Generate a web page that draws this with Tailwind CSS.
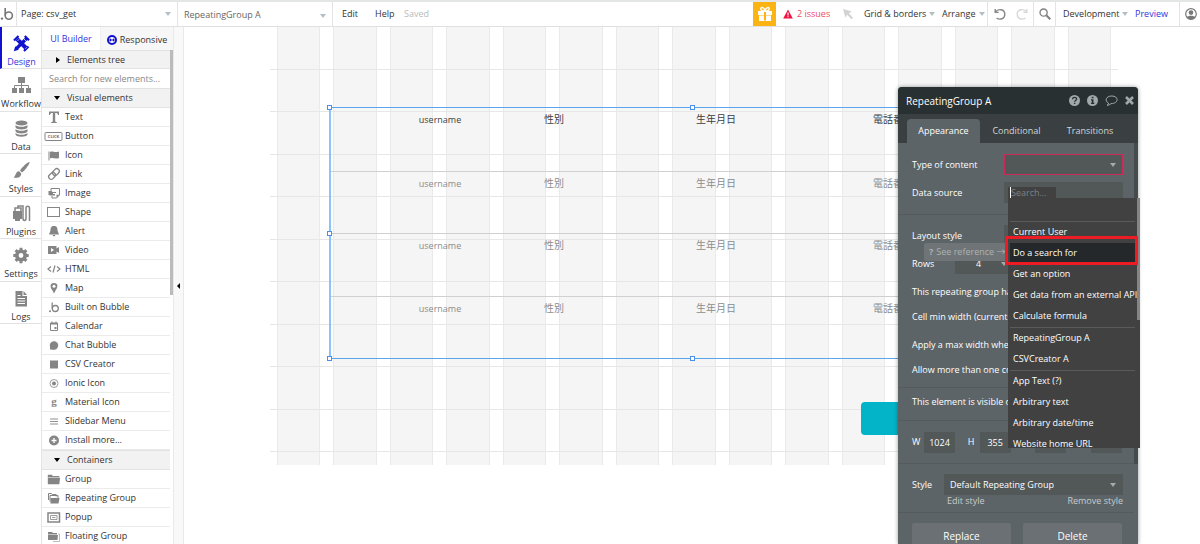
<!DOCTYPE html>
<html lang="en">
<head>
    <meta charset="UTF-8">
    <meta name="viewport" content="width=device-width, initial-scale=1.0">
    <title>csv_get | Bubble Editor</title>
    <script src="https://cdn.jsdelivr.net/npm/@tailwindcss/browser@4"></script>
</head>
<body class="h-screen overflow-hidden flex flex-col bg-white font-['Open_Sans','Noto_Sans_CJK_JP',sans-serif] text-[9px] leading-3 text-[#333]">

    <!-- Top bar -->
    <header class="h-[27px] shrink-0 flex items-stretch border-t-2 border-b border-t-[#e4e6e6] border-b-[#e0e0e0]">
        <a href="#" aria-label="Home" class="w-[17px] shrink-0 flex items-center border-r border-[#e4e4e4]">
            <svg class="w-4 h-4" viewBox="0 0 16 16" fill="none" stroke="#777" stroke-width="1.6"><circle cx="2" cy="12.6" r="1.2" fill="#777" stroke="none"/><path d="M5.2 2v7.500"/><circle cx="8.800" cy="9.600" r="3.600"/></svg>
        </a>
        <div class="relative w-[161px] flex border-r border-[#e4e4e4]">
            <select aria-label="Page" class="appearance-none w-full pl-1 outline-none"><option>Page: csv_get</option></select>
            <svg class="absolute right-1.5 top-2.5 w-1.5 h-1 pointer-events-none" viewBox="0 0 6 4" fill="#b4bfc6"><path d="M0 0h6L3 4z"/></svg>
        </div>
        <div class="relative w-[155px] flex border-r border-[#e4e4e4]">
            <select aria-label="Element" class="appearance-none w-full pl-1.5 pt-0.5 outline-none text-[#666]"><option>RepeatingGroup A</option></select>
            <svg class="absolute right-1.5 top-3 w-1.5 h-1 pointer-events-none" viewBox="0 0 6 4" fill="#b4bfc6"><path d="M0 0h6L3 4z"/></svg>
        </div>
        <nav class="flex items-center pl-[9px]">
            <button class="w-[33px] text-left">Edit</button>
            <button class="w-[29px] text-left">Help</button>
            <span class="text-[#bbb]">Saved</span>
        </nav>
        <div class="ml-auto flex items-stretch">
            <button aria-label="Gifts" class="w-[23px] bg-[#fcb415] flex items-center justify-center">
                <svg class="w-4 h-4" viewBox="0 0 16 16"><path d="M1 5h14v4H1zM2 9.500h12V15H2z" fill="#fff"/><path d="M8 5C5 5 3.500 4 3.800 2.600 4.200 1 7 .8 8 5c1-4.200 3.800-4 4.200-2.400C12.500 4 11 5 8 5z" fill="none" stroke="#fff" stroke-width="1.400"/><path d="M7 6v8.500h2V6z" fill="#fcb415"/></svg>
            </button>
            <button class="w-[66px] pl-[7px] flex items-center gap-1 text-[#ee4a5f]">
                <svg class="w-2.5 h-2.5" viewBox="0 0 10 10"><path d="M5 .5L9.800 9.400H.2z" fill="#f2113f"/><path d="M5 3.500v3M5 7.300v1" stroke="#fff" stroke-width="1.200"/></svg>
                2 issues
            </button>
            <button aria-label="Select" class="w-[22px] pl-px flex items-center">
                <svg class="w-2.5 h-3" viewBox="0 0 10 12" fill="#d3d3d3"><path d="M0 1l9 2.500-3.200 1.700 4.200 4.600-1.600 1.500L4.200 6.700 2.400 9.600z"/></svg>
            </button>
            <button class="w-[78px] flex items-center gap-[3px]">Grid &amp; borders
                <svg class="w-1.5 h-1" viewBox="0 0 6 4" fill="#b4bfc6"><path d="M0 0h6L3 4z"/></svg>
            </button>
            <button class="w-[46px] flex items-center gap-[3px] border-r border-[#e4e4e4]">Arrange
                <svg class="w-1.5 h-1" viewBox="0 0 6 4" fill="#b4bfc6"><path d="M0 0h6L3 4z"/></svg>
            </button>
            <button aria-label="Undo" class="w-[23px] flex items-center justify-center">
                <svg class="w-3 h-3" viewBox="0 0 12 12" fill="none" stroke="#888" stroke-width="1.400"><path d="M1.200 1v3.400h3.400M1.500 4.200C4 .2 10.800 1 10.800 6.200c0 4.800-5 6-8.200 3.900"/></svg>
            </button>
            <button aria-label="Redo" class="w-[23px] flex items-center justify-center border-r border-[#e4e4e4]">
                <svg class="w-3 h-3" viewBox="0 0 12 12" fill="none" stroke="#d8d8d8" stroke-width="1.400"><path d="M10.800 1v3.400H7.400M10.500 4.200C8 .2 1.200 1 1.200 6.200c0 4.800 5 6 8.200 3.900"/></svg>
            </button>
            <button aria-label="Search" class="w-[22px] flex items-center justify-center border-r border-[#e4e4e4]">
                <svg class="w-3 h-3" viewBox="0 0 12 12" fill="none" stroke="#808080"><circle cx="4.600" cy="4.600" r="3.600" stroke-width="1.300"/><path d="M7.300 7.300l4 4" stroke-width="2"/></svg>
            </button>
            <button class="w-[77px] pl-[7px] flex items-center gap-[3px]">Development
                <svg class="w-1.5 h-1" viewBox="0 0 6 4" fill="#b4bfc6"><path d="M0 0h6L3 4z"/></svg>
            </button>
            <a href="#" class="w-[47px] pl-0.5 flex items-center text-[#3434dc] border-r border-[#e4e4e4]">Preview</a>
            <button aria-label="Account" class="w-5 pl-[5px] flex items-center">
                <svg class="w-3 h-3 shrink-0" viewBox="0 0 12 12"><circle cx="6" cy="6" r="5.300" fill="#fff" stroke="#777" stroke-width="1.200"/><circle cx="6" cy="4.600" r="2.300" fill="#777"/><path d="M1.800 9.300C3 7.300 9 7.300 10.200 9.300 8 12.200 4 12.200 1.800 9.300z" fill="#777"/></svg>
            </button>
        </div>
    </header>

    <div class="flex-1 min-h-0 flex">

        <!-- Main tabs -->
        <nav class="w-[42px] shrink-0 border-r border-[#e4e4e4]">
            <div id="tabs" class="h-[297px] grid grid-rows-7"></div>
        </nav>

        <!-- Element palette -->
        <aside class="w-[131px] shrink-0 flex flex-col">
            <div class="h-[23px] shrink-0 flex">
                <button class="w-[58px] text-[#3434dc]">UI Builder</button>
                <button class="flex-1 pt-0.5 flex items-center justify-center gap-[3px] bg-[#f7f7f7] border-l border-[#eee]">
                    <svg class="w-2.5 h-2.5" viewBox="0 0 10 10"><circle cx="5" cy="5" r="4" fill="none" stroke="#1111cf" stroke-width="2"/><path d="M2 5l2-1.800v1.200h2V3.200L8 5 6 6.800V5.600H4v1.200z" fill="#1111cf"/></svg>
                    Responsive
                </button>
            </div>
            <div class="flex-1 min-h-0 flex">
                <div class="flex-1 min-w-0 overflow-hidden">
                    <button class="w-full h-[19px] pl-[14px] flex items-center gap-[7px] bg-[#f2f2f2] border-y border-[#e2e2e2]">
                        <svg class="w-1 h-1.5" viewBox="0 0 4 6"><path d="M0 0l4 3-4 3z"/></svg>Elements tree
                    </button>
                    <input type="text" aria-label="Search for new elements" placeholder="Search for new elements..." class="block w-full h-[19px] px-[7px] outline-none placeholder:text-[#888]">
                    <button class="w-full h-5 pl-[12px] flex items-center gap-[7px] bg-[#f2f2f2] border-y border-[#e2e2e2]">
                        <svg class="w-1.5 h-1" viewBox="0 0 6 4"><path d="M0 0h6L3 4z"/></svg>Visual elements
                    </button>
                    <div id="visual"></div>
                    <button class="w-full h-5 pl-[12px] flex items-center gap-[7px] bg-[#f2f2f2] border-y border-[#e2e2e2]">
                        <svg class="w-1.5 h-1" viewBox="0 0 6 4"><path d="M0 0h6L3 4z"/></svg>Containers
                    </button>
                    <div id="containers"></div>
                </div>
                <div class="w-[3px] h-[245px] bg-[#bbb]"></div>
            </div>
        </aside>
        <button aria-label="Collapse palette" class="w-[11px] shrink-0 flex items-center justify-center bg-[#f9f9f9] border-x border-[#e9e9e9]">
            <svg class="w-[3px] h-1.5" viewBox="0 0 3 6"><path d="M3 0v6L0 3z"/></svg>
        </button>

        <!-- Canvas -->
        <main class="relative flex-1 min-w-0 overflow-hidden">
            <div class="absolute left-[86px] top-0 w-[848px] h-[438px]">
                <div id="columns" class="absolute inset-x-[7px] inset-y-0 grid grid-cols-15 gap-[13px]"></div>
                <div id="lines" class="absolute inset-x-0 top-0 h-[425px] grid grid-rows-10"></div>
                <div class="absolute left-[591px] top-[375px] w-[140px] h-[33px] rounded bg-[#03b4c8]"></div>
                <div class="absolute left-[59px] top-20 w-[726px] h-[252px] border border-l-2 border-[#5aa5ec] border-l-[#8cc4fa]">
                    <div id="cells" class="h-full grid grid-rows-4"></div>
                    <i class="absolute -left-1 -top-[3px] size-[5px] bg-white border border-[#4a8ff0]"></i>
                    <i class="absolute left-[359px] -top-[3px] size-[5px] bg-white border border-[#4a8ff0]"></i>
                    <i class="absolute -left-1 top-[123px] size-[5px] bg-white border border-[#4a8ff0]"></i>
                    <i class="absolute -left-1 -bottom-[3px] size-[5px] bg-white border border-[#4a8ff0]"></i>
                    <i class="absolute left-[359px] -bottom-[3px] size-[5px] bg-white border border-[#4a8ff0]"></i>
                </div>
            </div>
        </main>
    </div>

    <!-- Property editor -->
    <section class="absolute right-[62px] top-[87px] bottom-0 w-[240px] flex flex-col rounded-t overflow-hidden bg-[#5d6467] text-white shadow-[0_0_4px_rgba(0,0,0,0.4)]">
        <div class="h-[27px] shrink-0 pl-2 pr-1 flex items-center bg-[#293031] text-white">
            <h2 class="text-[10px]">RepeatingGroup A</h2>
            <div class="ml-auto flex items-center gap-[7px]">
                <button aria-label="Help"><svg class="block w-[11px] h-[11px]" viewBox="0 0 11 11"><circle cx="5.500" cy="5.500" r="5.500" fill="#a2a8a9"/><path d="M3.600 4.200c0-2.400 4-2.400 4-.1 0 1.400-2 1.400-2 2.700M5.600 7.700v1.400" fill="none" stroke="#293031" stroke-width="1.400"/></svg></button>
                <button aria-label="Info"><svg class="block w-[11px] h-[11px]" viewBox="0 0 11 11"><circle cx="5.500" cy="5.500" r="5.500" fill="#a2a8a9"/><path d="M4.700 1.700h1.800v1.600H4.700zM4 4.200h2.500v3.600h.8V9H4V7.800h.8V5.400H4z" fill="#293031"/></svg></button>
                <button aria-label="Comment"><svg class="block w-[13px] h-[11px]" viewBox="0 0 13 11" fill="none" stroke="#a2a8a9"><path d="M3.600 8.200C-.8 6 .8 1 6.800 1c7.200 0 7.200 7.600-.8 7.600C5 9.800 3.300 10.300 2 10.200c.9-.4 1.500-1 1.600-2z"/></svg></button>
                <button aria-label="Close"><svg class="block w-[9px] h-[9px]" viewBox="0 0 9 9" stroke="#a2a8a9" stroke-width="2.600"><path d="M1 1l7 7M8 1L1 8"/></svg></button>
            </div>
        </div>
        <div class="h-[29px] shrink-0 pl-[9px] flex items-end bg-[#3a4042] text-[#d2d5d6]">
            <button class="w-[73px] h-6 rounded-t bg-[#5d6467] text-white">Appearance</button>
            <button class="w-[73px] h-6">Conditional</button>
            <button class="w-[74px] h-6">Transitions</button>
        </div>
        <div class="relative flex-1 min-h-0 overflow-hidden whitespace-nowrap">
            <div class="absolute right-0 top-0 w-1 h-[321px] bg-[#464c4e]"></div>
            <form class="w-[236px]">
                <div class="pl-[14px] pr-[11px] pt-[11px] pb-[11px] flex flex-col gap-[7px] border-b border-[#555b5d]">
                    <div class="h-[21px] flex items-center justify-between">
                        <label for="type">Type of content</label>
                        <div class="relative w-[119px] h-full">
                            <select id="type" class="appearance-none w-full h-full bg-[#525758] border border-[#c82d58] outline-none"><option></option></select>
                            <svg class="absolute right-[7px] top-[9px] w-1.5 h-1 pointer-events-none" viewBox="0 0 6 4" fill="#a5aaab"><path d="M0 0h6L3 4z"/></svg>
                        </div>
                    </div>
                    <div class="h-[21px] flex items-center justify-between">
                        <label for="source">Data source</label>
                        <div class="w-[119px] h-full pl-1 pt-[5px] bg-[#525758]">
                            <div class="w-12 h-4 pl-0.5 bg-[#414141]">
                                <input id="source" type="text" placeholder="Search..." class="block w-full h-[11px] border-l border-white outline-none placeholder:text-[#808080]">
                            </div>
                        </div>
                    </div>
                </div>
                <div class="pl-[14px] pr-[11px] pt-[10px] pb-[7px] flex flex-col border-b border-[#555b5d]">
                    <div class="h-[21px] mb-[7px] flex items-center justify-between">
                        <label for="layout">Layout style</label>
                        <select id="layout" class="appearance-none w-[119px] h-full bg-[#525758]"><option></option></select>
                    </div>
                    <div class="h-[21px] mb-[7px] flex items-center">
                        <label for="rows" class="w-[43px]">Rows</label>
                        <div class="relative w-14 h-full">
                            <select id="rows" class="appearance-none w-full h-full pl-[21px] bg-[#525758] outline-none"><option>4</option></select>
                            <svg class="absolute right-1 top-[9px] w-1.5 h-1 pointer-events-none" viewBox="0 0 6 4" fill="#a5aaab"><path d="M0 0h6L3 4z"/></svg>
                        </div>
                    </div>
                    <div class="h-[21px] mb-1 flex items-center justify-between">
                        <label for="fixed">This repeating group has fixed rows</label>
                        <input id="fixed" type="checkbox" class="size-3">
                    </div>
                    <div class="h-[21px] mb-[7px] flex items-center justify-between">
                        <label for="minw">Cell min width (current width)</label>
                        <input id="minw" type="text" class="w-8 h-full bg-[#525758]">
                    </div>
                    <div class="h-[21px] mb-1 flex items-center justify-between">
                        <label for="maxw">Apply a max width when stretched</label>
                        <input id="maxw" type="checkbox" class="size-3">
                    </div>
                    <div class="h-[21px] flex items-center justify-between">
                        <label for="multi">Allow more than one column</label>
                        <input id="multi" type="checkbox" class="size-3">
                    </div>
                </div>
                <div class="pl-[14px] pr-[11px] h-[33px] pb-1 flex items-center justify-between border-b border-[#555b5d]">
                    <label for="visible">This element is visible on page load</label>
                    <input id="visible" type="checkbox" class="size-3">
                </div>
                <div class="pl-[14px] pr-[12px] h-[43px] flex items-center justify-between border-b border-[#555b5d]">
                    <label class="w-[43px] flex items-center justify-between">W<input type="text" value="1024" class="w-[31px] h-[21px] text-center bg-[#525758]"></label>
                    <label class="w-[43px] flex items-center justify-between">H<input type="text" value="355" class="w-[31px] h-[21px] text-center bg-[#525758]"></label>
                    <label class="w-[43px] flex items-center justify-between">X<input type="text" class="w-[31px] h-[21px] text-center bg-[#525758]"></label>
                    <label class="w-[43px] flex items-center justify-between">Y<input type="text" class="w-[31px] h-[21px] text-center bg-[#525758]"></label>
                </div>
                <div class="pl-[14px] pr-[11px] pt-[10px] pb-[5px] border-b border-[#555b5d]">
                    <div class="h-[21px] flex items-center">
                        <label for="style" class="w-8">Style</label>
                        <div class="relative flex-1 h-full">
                            <select id="style" class="appearance-none w-full h-full pl-1.5 bg-[#525758] outline-none"><option>Default Repeating Group</option></select>
                            <svg class="absolute right-[7px] top-[9px] w-1.5 h-1 pointer-events-none" viewBox="0 0 6 4" fill="#a5aaab"><path d="M0 0h6L3 4z"/></svg>
                        </div>
                    </div>
                    <div class="pl-[35px] flex justify-between text-[#c9cccd]">
                        <a href="#">Edit style</a>
                        <a href="#">Remove style</a>
                    </div>
                </div>
                <div class="pl-[14px] pr-[12px] pt-[10px] grid grid-cols-2 gap-3">
                    <button type="button" class="h-[25px] bg-[#6a7073] text-[10px] rounded-xs">Replace</button>
                    <button type="button" class="h-[25px] bg-[#6a7073] text-[10px] rounded-xs">Delete</button>
                </div>
            </form>
        </div>
    </section>

    <div class="absolute right-[190px] top-[243px] w-[86px] h-[18px] pl-[5px] pb-px flex items-center gap-[3px] rounded-xs bg-[#6f7577] text-[#adb1b2] whitespace-nowrap"><b>?</b>See reference →</div>

    <!-- Data source menu -->
    <div class="absolute right-[60px] top-[198px] w-[132px] h-[250px] overflow-hidden bg-[#414141] text-white whitespace-nowrap">
        <div class="absolute right-0 top-0 w-[3px] h-[122px] bg-[#858585]"></div>
        <div id="menu" class="w-[127px] pt-[23px]"></div>
    </div>
    <div class="absolute right-[62px] top-[236px] w-[133px] h-[29px] border-3 border-[#ed1c24] pointer-events-none"></div>

    <script>
        const g = '#858585';
        const tabs = [
            ['Design', `<g stroke="#1111cf" fill="none"><path d="M5 5l10 10" stroke-width="4"/><path d="M15 4L4.500 14.500" stroke-width="3.200"/><path d="M2 6.500L6.500 2M12 17l4.500-4.500M12.800 2L17 6.200" stroke-width="2.200"/></g><path d="M1.800 17.200l1.400-5 3.600 3.600z" fill="#1111cf"/><path d="M7.200 5.200L5.600 6.800M15 13.200l-1.600 1.600M12 5l2.200 2.200" stroke="#fff" stroke-width=".7"/>`],
            ['Workflow', `<path d="M6 1h7v6H6zM0 12h5v5H0zM7 12h5v5H7zM14 12h5v5h-5z" fill="${g}"/><path d="M9.500 7v5M2.500 12V9.500h14V12" fill="none" stroke="${g}"/>`],
            ['Data', `<g fill="${g}"><ellipse cx="9.500" cy="4" rx="6" ry="2.600"/><path d="M3.500 6c2 2.400 10 2.400 12 0v2.200c-1 3-11 3-12 0zM3.500 10c2 2.400 10 2.400 12 0v2.200c-1 3-11 3-12 0zM3.500 14c2 2.400 10 2.400 12 0v1.500c-1 3-11 3-12 0z"/></g>`],
            ['Styles', `<path d="M17.500 1c1 .8-4.500 8.500-7.500 10.500L8 9.500C10 6 16.500.2 17.500 1zM7.200 10.300l2 2.100c.2 3.500-3.500 5.200-7.700 4 2.700-1.400 2-6.300 5.700-6.100z" fill="${g}"/>`],
            ['Plugins', `<path d="M1 7h9v8H8v2H3v-2H1z" fill="${g}"/><path d="M3 7V4h6v3M6 4V2h5v12.500c0 2.500 3 2.500 3 0V4c0-2.500 3.500-2.500 3.500 0v13" fill="none" stroke="${g}" stroke-width="1.500"/>`],
            ['Settings', `<circle cx="9" cy="9.500" r="4.200" fill="none" stroke="${g}" stroke-width="3.600"/><path d="M9 1.800v3M9 14.200v3M1.300 9.500h3M13.700 9.500h3M3.600 4.100l2 2M12.400 12.900l2 2M14.400 4.100l-2 2M5.600 12.900l-2 2" stroke="${g}" stroke-width="3"/>`],
            ['Logs', `<path d="M3.500 2h7v5H15v10.500H3.500zM11.500 2L15 6h-3.500z" fill="${g}"/><path d="M5.500 9.500h7.500M5.500 12h7.500M5.500 14.500h7.500M5.500 6.500h3" stroke="#fff"/>`]
        ];
        document.getElementById('tabs').innerHTML = tabs.map(([name, icon], i) => `
            <button class="w-full ${i === 0 ? 'border-l-2 border-l-[#1111cf] text-[#3434dc]' : 'pl-px'} pt-[7px] flex flex-col items-center gap-[3px] border-b border-b-[#e2e2e2]">
                <svg class="w-[19px] h-[19px] shrink-0" viewBox="0 0 19 19">${icon}</svg>${name}
            </button>`).join('');

        const folder = `<path d="M1 2h5l1 1.500h8V5H1zM1 5.500h15L15 13H1z" fill="${g}"/>`;
        const visual = [
            ['Text', `<path d="M3 2.500h10V6h-1c-.3-1.600-.8-2-2.800-2v8c0 .8.300 1 1.600 1.100v.9H5.200v-.9c1.300-.1 1.600-.3 1.600-1.100V4C4.800 4 4.300 4.400 4 6H3z" fill="${g}"/>`],
            ['Button', `<rect x="-1" y="4.500" width="17" height="8" rx="1" fill="none" stroke="${g}"/><text x="7.500" y="10.200" font-size="4" text-anchor="middle" fill="#666" font-weight="bold">CLICK</text>`],
            ['Icon', `<path d="M3 4.500v9" stroke="${g}"/><path d="M4 5c3-1.500 4 1 9-.5v6.500c-4 1.500-6-1-9 .5z" fill="${g}"/>`],
            ['Link', `<g fill="none" stroke="${g}" stroke-width="1.300" transform="rotate(-45 8 8)"><rect x="1.500" y="5.500" width="7.500" height="5" rx="2.500"/><rect x="7" y="5.500" width="7.500" height="5" rx="2.500"/></g>`],
            ['Image', `<path d="M5 6V3.500h8.500v6.500L10.500 13H6v-2" fill="none" stroke="${g}"/><path d="M2.500 6h3l1 1H10v1H7v1h2v1.500H4.500L2.500 10z" fill="${g}"/><path d="M13.500 9.800h-3V13z" fill="${g}"/>`],
            ['Shape', `<rect x="1.500" y="3.500" width="12" height="9" fill="none" stroke="${g}"/>`],
            ['Alert', `<path d="M8 3c3 0 3.500 2 3.500 4.500L13 11.500H3l1.500-4C4.500 5 5 3 8 3zM6.500 12h3c-.5 1.800-2.500 1.800-3 0z" fill="${g}"/>`],
            ['Video', `<path d="M2 4h8.500v2.500L13 5v6l-2.500-1.500V12H2z" fill="${g}"/><path d="M5 6v4l3-2z" fill="#fff"/>`],
            ['HTML', `<path d="M5 5.500L2 8l3 2.500M11 5.500L14 8l-3 2.500M9 4.500L7 11.500" fill="none" stroke="${g}" stroke-width="1.200"/>`],
            ['Map', `<path d="M8 3c4.500 0 4 4.200 1.800 7L8 13.500 6.200 10C4 7.200 3.500 3 8 3z" fill="${g}"/><circle cx="8" cy="6.300" r="1.500" fill="#fff"/>`],
            ['Built on Bubble', `<circle cx="9.300" cy="9.500" r="3" fill="none" stroke="${g}" stroke-width="1.300"/><path d="M6.200 3.500v6" stroke="${g}" stroke-width="1.300"/><circle cx="4" cy="12.200" r="1" fill="${g}"/>`],
            ['Calendar', `<path d="M4.500 5h7v7.500h-7zM6 3.500V5M10 3.500V5" fill="none" stroke="${g}"/><path d="M4.500 5h7v1.500h-7zM8.500 9h2v2h-2z" fill="${g}"/>`],
            ['Chat Bubble', `<circle cx="8" cy="8.500" r="4.200" fill="${g}"/><path d="M4 12.500h4v-3H4z" fill="${g}"/>`],
            ['CSV Creator', `<path d="M4 4.500h8v8H4z" fill="${g}"/>`],
            ['Ionic Icon', `<circle cx="8" cy="8.500" r="4" fill="none" stroke="${g}" stroke-width=".8"/><circle cx="8" cy="8.500" r="2" fill="${g}"/>`],
            ['Material Icon', `<text x="8" y="11" font-size="11" font-family="Liberation Serif, serif" font-weight="bold" text-anchor="middle" fill="#888">g</text>`],
            ['Slidebar Menu', `<path d="M4 6h8M4 8.500h8M4 11h8" stroke="${g}" stroke-width=".9"/>`],
            ['Install more...', `<circle cx="8" cy="8.500" r="5" fill="${g}"/><path d="M8 6v5M5.500 8.500h5" stroke="#fff" stroke-width="1.300"/>`]
        ];
        const containers = [
            ['Group', `<g transform="translate(1 2) scale(.82 .86)">${folder}</g>`],
            ['Repeating Group', `<path d="M2.500 10V3.500h3l.7 1h4v2M4 11.500V5.500h8V8" fill="none" stroke="${g}"/><path d="M4.500 8h9l-1 5.500h-8z" fill="${g}"/>`],
            ['Popup', `<rect x="2" y="4" width="11.500" height="9" fill="none" stroke="${g}" stroke-width="1.500"/><path d="M4.500 6.500h6.500v4H4.500zM6 8.500h3.500" fill="none" stroke="${g}" stroke-width=".8"/>`],
            ['Floating Group', `<path d="M2 4h4l1 1h4v1.500H2zM2 7h10l-.5 5H2z" fill="${g}"/><path d="M12 6h1.500v7.500H7" fill="none" stroke="#bbb"/>`]
        ];
        const paletteRow = ([name, icon]) => `
            <button class="w-full h-[19px] pl-1 flex items-center gap-[3px] border-b border-[#ebebeb]">
                <svg class="w-4 h-4 shrink-0 overflow-visible" viewBox="0 0 16 16">${icon}</svg>${name}
            </button>`;
        document.getElementById('visual').innerHTML = visual.map(paletteRow).join('');
        document.getElementById('containers').innerHTML = containers.map(paletteRow).join('');

        // Canvas grid
        document.getElementById('columns').innerHTML = '<div class="bg-[#f5f5f5] border-x border-[#eaeaea]"></div>'.repeat(15);
        document.getElementById('lines').innerHTML = '<div class="border-b border-[#e7e7e7]"></div>'.repeat(10);

        // First cell is live, the others are previews
        document.getElementById('cells').innerHTML = [0, 1, 2, 3].map(i => `
            <div class="pl-[55px] pt-1 grid grid-cols-[108px_120px_204px_150px] text-center leading-[15px] ${i === 0 ? 'text-[#3d3d3d]' : 'text-[#8c8c8c] border-t border-[#d0d0d0]'}">
                <span>username</span><span class="text-[10px]">性別</span><span class="text-[10px]">生年月日</span><span class="text-[10px]">電話番号</span>
            </div>`).join('');

        const menu = [
            ['Current User', 'Do a search for', 'Get an option', 'Get data from an external API', 'Calculate formula'],
            ['RepeatingGroup A', 'CSVCreator A'],
            ['App Text (?)', 'Arbitrary text', 'Arbitrary date/time', 'Website home URL']
        ];
        document.getElementById('menu').innerHTML = menu.map(group => `
            <div class="ml-0.5 border-t border-[#5a5a5a]">${group.map(item => `
                <button class="block w-full h-[21px] pl-[3px] pb-0.5 text-left ${item === 'Do a search for' ? 'bg-[#24282a]' : ''}">${item}</button>`).join('')}
            </div>`).join('');
    </script>
</body>
</html>
